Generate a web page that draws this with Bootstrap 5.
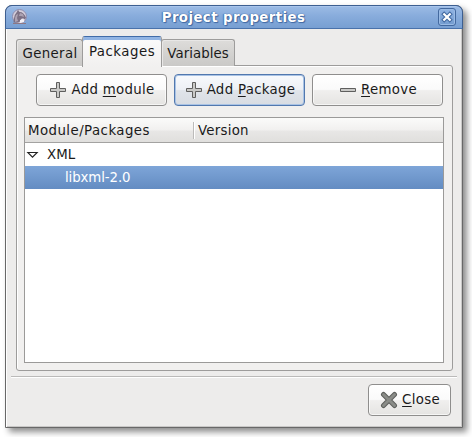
<!DOCTYPE html>
<html lang="en">
<head>
<meta charset="utf-8">
<meta name="viewport" content="width=device-width, initial-scale=1">
<title>Project properties</title>
<link href="https://cdn.jsdelivr.net/npm/bootstrap@5.3.0/dist/css/bootstrap.min.css" rel="stylesheet">
<style>
body{background:#fff;height:437px;padding:5px 0 0 5px;font-family:"DejaVu Sans",sans-serif;font-size:13.33px;line-height:16px;color:#1a1a1a;overflow:hidden}
.dialog{width:458px;height:423px;border:1px solid #686868;border-radius:7px 7px 0 0;background:#edeceb;box-shadow:inset 1px 0 #fff,inset -1px -1px #c9c8c7,4px 4px 6px rgba(0,0,0,.45)}
.titlebar{height:24px;margin:-1px -1px 0;border:1px solid #3d5f91;border-bottom-color:#4972ab;border-radius:7px 7px 0 0;background:linear-gradient(#9cbbe5,#88acdc 45%,#779fd2);box-shadow:inset 0 1px #a9c5ec;padding:0 6px 0 5px}
.titlebar h1{font-size:13.33px;line-height:16px;letter-spacing:.4px;font-weight:700;color:#fff;padding-top:1px;text-shadow:0 0 1px #34588d,1px 1px 1px #416aa5,-1px 0 1px #527db8}
.win-close{width:18px;height:18px;padding:0;border:1px solid #43699f;border-radius:3px;background:linear-gradient(#91b4e3,#739ccf);box-shadow:inset 0 0 0 1px #9abbe5;line-height:0}
.tabs{padding-left:10px;height:30px;margin-top:7px}
.tabs .nav-link{padding:0;color:#1a1a1a;border:1px solid #9d9c9b;border-bottom:0;border-radius:3px 3px 0 0;background:linear-gradient(#dddcda,#cac9c7);height:27px;line-height:28px;text-align:center;box-shadow:inset 1px 1px #e8e7e6;letter-spacing:.35px}
.tabs .nav-link.active{height:31px;line-height:29px;background:linear-gradient(#fbfbfb,#f1f0ef);color:#1a1a1a;border-color:#9d9c9b;border-top:1px solid #416ca8;box-shadow:inset 0 3px #91b4e3;position:relative;z-index:1;letter-spacing:.5px}
.tabs .t-gen{width:67px;padding-left:1px}.t-pack{width:80px;margin-left:-1px}.tabs .t-var{width:74px;margin-left:-1px;letter-spacing:.05px}
.pane{width:437px;height:306px;margin:-1px 0 0 10px;border:1px solid #9d9c9b;border-radius:0 3px 3px 3px;background:#f1f0ef;box-shadow:inset 1px 1px #fff;padding:8px 7px 0}
.actions{padding-left:12px;width:419px}
.gbtn{height:32px;padding:0;color:#1a1a1a;border:1px solid #8f8e8d;border-radius:4px;background:linear-gradient(#fff,#fafafa 48%,#f0efee 52%,#e5e4e2);font-size:13.33px;line-height:16px;letter-spacing:.3px;box-shadow:inset 0 0 0 1px rgba(255,255,255,.65)}
.gbtn svg{margin:0 4px 0 1px}
.gbtn u{text-underline-offset:2px;text-decoration-thickness:1px;text-decoration-skip-ink:none}
.act{width:131px}
.act.focused{border-color:#5278ae;background:linear-gradient(#f8fafd,#edf0f5 48%,#e0e4ea 52%,#d8dce2);box-shadow:inset 0 0 0 1px #a9c3e5}
.tree{width:420px;height:246px;margin-top:11px;border:1px solid #9b9a99;background:#fff}
.tree-head{height:25px;border-bottom:1px solid #a3a2a1;background:linear-gradient(#fbfbfa,#f1f0ef 50%,#e8e7e6 54%,#e0dfdd)}
.tree-head .first{width:169px;height:17px;line-height:17px;margin-top:4px;border-right:1px solid #bcbbba;padding-left:3px;letter-spacing:.45px}
.tree-head .second{height:17px;line-height:17px;margin-top:4px;border-left:1px solid #fff;padding-left:3px;letter-spacing:.25px}
.tree-row{height:23px}
.node{padding-left:6px}
.picked{background:linear-gradient(#7ea5d8,#638cc2);color:#fff;padding-left:40px;letter-spacing:-.1px}
.rule{width:446px;margin:5px 0 0 5px;height:2px;background:#bbbab9;border-bottom:1px solid #fff}
.foot{padding:6px 11px 0 0}
.g-close{width:83px}
</style>
</head>
<body>
<main class="dialog">
  <header class="titlebar d-flex align-items-center justify-content-between">
    <svg width="18" height="18" viewBox="0 0 18 18"><circle cx="8.5" cy="8.5" r="7" fill="#d3cedb" stroke="#8e8cae"/><path d="M2.5 14.5 2.8 11l1-4 2-3L7 2l1.5 2c3 0 5 2 6.500 5.500l-1 2-2-1.300-2 .8 0 2-3 1.500Z" fill="#7c7084"/><path d="m4 10 1-3 2-1-1 4 1 3-3 1Zm5-5 3 1 1 3-3-1-2 0Z" fill="#aca2b2"/><path d="m9 12 3-1 1 1 0 2-4 1Z" fill="#f1eff5"/><path d="M2 15.5h13" stroke="#8d7885"/></svg>
    <h1 class="m-0">Project properties</h1>
    <button class="win-close" aria-label="Close window"><svg width="16" height="16" viewBox="0 0 16 16"><path d="m5.2 5.2 5.6 5.6m0-5.6-5.6 5.6" stroke="#3f679f" stroke-width="4.2" stroke-linecap="square"/><path d="m5.2 5.2 5.6 5.6m0-5.6-5.6 5.6" stroke="#fff" stroke-width="2.2" stroke-linecap="square"/></svg></button>
  </header>
  <nav class="tabs nav flex-nowrap align-items-end">
    <a class="nav-link t-gen">General</a>
    <a class="nav-link active t-pack align-self-start">Packages</a>
    <a class="nav-link t-var">Variables</a>
  </nav>
  <section class="pane">
    <div class="d-flex justify-content-end actions">
      <button class="btn gbtn act d-flex align-items-center justify-content-center me-auto"><svg width="18" height="18" viewBox="0 0 18 18"><path d="M7.5 1.5h3v6h6v3h-6v6h-3v-6h-6v-3h6Z" fill="#c9c9c7" stroke="#5f5f5e"/></svg><span>Add <u>m</u>odule</span></button>
      <button class="btn gbtn act focused d-flex align-items-center justify-content-center me-auto"><svg width="18" height="18" viewBox="0 0 18 18"><path d="M7.5 1.5h3v6h6v3h-6v6h-3v-6h-6v-3h6Z" fill="#c9c9c7" stroke="#5f5f5e"/></svg><span>Add <u>P</u>ackage</span></button>
      <button class="btn gbtn act d-flex align-items-center justify-content-center"><svg width="18" height="18" viewBox="0 0 18 18"><path d="M1.5 7.5h15v3h-15Z" fill="#c9c9c7" stroke="#5f5f5e"/></svg><span><u>R</u>emove</span></button>
    </div>
    <div class="tree">
      <div class="tree-head d-flex"><div class="first">Module/Packages</div><div class="second">Version</div></div>
      <div class="tree-row d-flex align-items-center"><svg width="16" height="16" viewBox="0 0 16 16"><path d="M2.8 5.5h9.4L7.5 10.2Z" fill="#fff" stroke="#222" stroke-width="1.1"/></svg><span class="node">XML</span></div>
      <div class="tree-row picked d-flex align-items-center">libxml-2.0</div>
    </div>
  </section>
  <div class="rule"></div>
  <footer class="d-flex justify-content-end foot">
    <button class="btn gbtn g-close d-flex align-items-center justify-content-center"><svg width="18" height="18" viewBox="0 0 18 18"><path d="m3.5 3.5 11 11m0-11-11 11" stroke="#5d5f5c" stroke-width="5" stroke-linecap="round"/><path d="m3.5 3.5 11 11m0-11-11 11" stroke="#8a8c88" stroke-width="3" stroke-linecap="round"/></svg><span><u>C</u>lose</span></button>
  </footer>
</main>
</body>
</html>
